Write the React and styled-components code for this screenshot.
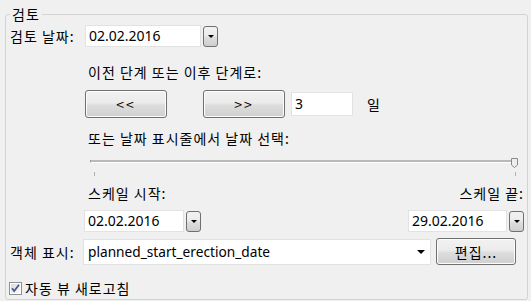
import React from "react";
import styled, { createGlobalStyle } from "styled-components";

const GlobalStyle = createGlobalStyle`
  html, body { margin: 0; padding: 0; background: #f0f0f0; }
  body {
    width: 531px; height: 301px; overflow: hidden;
    font-family: "Noto Sans CJK KR", "Noto Sans", sans-serif;
    font-size: 14px; letter-spacing: 1px; color: #000;
    line-height: 18px;
  }
`;

const Group = styled.section`
  position: relative;
  margin: 14px 3px 1px 5px;
  border: 1px solid #d3d3d3;
  border-radius: 3px;
  padding: 10px 3px 2px 4px;
  display: flex;
  flex-direction: column;
`;

const Legend = styled.span`
  position: absolute;
  top: -10px;
  left: 4px;
  padding: 0 2px;
  background: #f0f0f0;
  line-height: 18px;
`;

const Row = styled.div`
  display: flex;
  align-items: center;
  height: ${(p) => p.$h}px;
  margin-top: ${(p) => p.$mt || 0}px;
  margin-left: ${(p) => p.$ml || 0}px;
  justify-content: ${(p) => p.$justify || "flex-start"};
`;

const Label = styled.span`
  width: ${(p) => p.$w}px;
  flex: none;
  white-space: nowrap;
  line-height: 18px;
`;

const Text = styled.div`
  line-height: 18px;
  margin-top: ${(p) => p.$mt || 0}px;
  padding-left: 3px;
  white-space: nowrap;
`;

const Indent = styled.div`
  margin-left: 75px;
  display: flex;
  flex-direction: column;
`;

const TextInput = styled.div`
  box-sizing: border-box;
  width: ${(p) => p.$w}px;
  height: ${(p) => p.$h}px;
  margin-left: ${(p) => p.$ml || 0}px;
  background: #fff;
  border: 1px solid #e2e2e2;
  padding-left: 3px;
  display: flex;
  align-items: center;
  white-space: nowrap;
  flex: none;
  font-family: "Noto Sans", sans-serif;
  font-size: 14px;
  letter-spacing: 0;
`;

const DropButton = styled.div`
  box-sizing: border-box;
  width: 15px;
  height: 21px;
  margin-left: 2px;
  border: 1px solid #707070;
  border-radius: 3px;
  background: linear-gradient(#f2f2f2 0%, #ebebeb 45%, #dddddd 55%, #cfcfcf 100%);
  display: flex;
  align-items: center;
  justify-content: center;
  flex: none;
  &::after {
    content: "";
    border-left: 3px solid transparent;
    border-right: 3px solid transparent;
    border-top: 3px solid #000;
  }
`;

const PushButton = styled.div`
  box-sizing: border-box;
  width: ${(p) => p.$w}px;
  height: ${(p) => p.$h}px;
  margin-left: ${(p) => p.$ml || 0}px;
  border: 1px solid #707070;
  border-radius: 3px;
  background: linear-gradient(#f2f2f2 0%, #ebebeb 45%, #dddddd 55%, #cfcfcf 100%);
  box-shadow: inset 0 0 0 1px #fcfcfc;
  display: flex;
  align-items: center;
  justify-content: center;
  letter-spacing: ${(p) => p.$ls ?? 1}px;
  flex: none;
`;

const Unit = styled.span`
  margin-left: 14px;
`;

const Slider = styled.div`
  position: relative;
  margin-top: 8px;
  margin-left: 5px;
  width: 429px;
  height: 22px;
`;

const Track = styled.div`
  position: absolute;
  left: 0;
  right: 2px;
  top: 5px;
  height: 2px;
  background: #b9b9b9;
  border-left: 1px solid #9a9a9a;
  border-bottom: 1px solid #ffffff;
`;

const Thumb = styled.svg`
  position: absolute;
  right: 1px;
  top: 3px;
`;

const Tick = styled.div`
  position: absolute;
  top: 17px;
  left: ${(p) => p.$x}px;
  width: 1px;
  height: 4px;
  background: #b0b0b0;
`;

const Combo = styled.div`
  box-sizing: border-box;
  width: 348px;
  height: 26px;
  background: #fff;
  border: 1px solid #e2e2e2;
  padding: 0 5px 0 4px;
  display: flex;
  align-items: center;
  justify-content: space-between;
  flex: none;
  font-family: "Noto Sans", sans-serif;
  font-size: 13.7px;
  letter-spacing: 0;
  &::after {
    content: "";
    border-left: 4px solid transparent;
    border-right: 4px solid transparent;
    border-top: 4px solid #000;
  }
`;

const CheckRow = styled.label`
  display: flex;
  align-items: center;
  height: 18px;
  margin-top: 14px;
  margin-left: -1px;
`;

const CheckText = styled.span`
  margin-left: 3px;
  line-height: 18px;
`;

function DateField({ value, w }) {
  return (
    <>
      <TextInput $w={w} $h={22}>{value}</TextInput>
      <DropButton />
    </>
  );
}

function CheckBox() {
  return (
    <svg width="13" height="13" viewBox="0 0 13 13">
      <defs>
        <linearGradient id="cbg" x1="0" y1="0" x2="1" y2="1">
          <stop offset="0" stopColor="#dcdcdc" />
          <stop offset="1" stopColor="#fafafa" />
        </linearGradient>
      </defs>
      <rect x="0.5" y="0.5" width="12" height="12" fill="#fff" stroke="#8e8f8f" />
      <rect x="2" y="2" width="9" height="9" fill="url(#cbg)" />
      <path d="M3 6.2 L5.2 9 L10 2.8" fill="none" stroke="#4a5b8c" strokeWidth="1.8" />
    </svg>
  );
}

export default function App() {
  return (
    <>
      <GlobalStyle />
      <Group>
        <Legend>검토</Legend>
        <Row $h={22}>
          <Label $w={75}>검토 날짜:</Label>
          <DateField value="02.02.2016" w={116} />
        </Row>
        <Indent>
          <Text $mt={16}>이전 단계 또는 이후 단계로:</Text>
          <Row $h={28} $mt={9}>
            <PushButton $w={82} $h={28} $ls={2}>&lt;&lt;</PushButton>
            <PushButton $w={82} $h={28} $ml={36} $ls={2}>&gt;&gt;</PushButton>
            <TextInput $w={62} $h={24} $ml={6}>3</TextInput>
            <Unit>일</Unit>
          </Row>
          <Text $mt={11}>또는 날짜 표시줄에서 날짜 선택:</Text>
          <Slider>
            <Track />
            <Thumb width="7" height="10" viewBox="0 0 7 10">
              <path d="M0.5 0.5 H6.5 V7 L3.5 9.5 L0.5 7 Z" fill="#eeeeee" stroke="#8a8a8a" />
            </Thumb>
            <Tick $x={4} />
            <Tick $x={425} />
          </Slider>
          <Row $h={18} $mt={7} $justify="space-between">
            <Text>스케일 시작:</Text>
            <span>스케일 끝:</span>
          </Row>
          <Row $h={22} $mt={8} $ml={-1} $justify="space-between">
            <Row $h={22}>
              <DateField value="02.02.2016" w={100} />
            </Row>
            <Row $h={22}>
              <DateField value="29.02.2016" w={99} />
            </Row>
          </Row>
        </Indent>
        <Row $h={27} $mt={6}>
          <Label $w={73}>객체 표시:</Label>
          <Combo>planned_start_erection_date</Combo>
          <PushButton $w={80} $h={27} $ml={5}>편집...</PushButton>
        </Row>
        <CheckRow>
          <CheckBox />
          <CheckText>자동 뷰 새로고침</CheckText>
        </CheckRow>
      </Group>
    </>
  );
}
